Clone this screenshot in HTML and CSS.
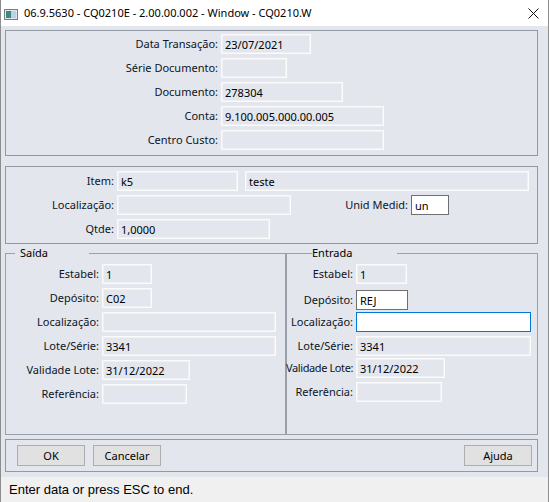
FILE: index.html
```html
<!DOCTYPE html>
<html lang="pt">
<head>
  <meta charset="UTF-8">
  <title>CQ0210.W</title>
  <link rel="stylesheet" href="styles.css">
</head>
<body>

  <div class="window">
    <div class="titlebar">
      <svg class="app-icon" width="14" height="11" viewBox="0 0 14 11">
        <rect x="0.5" y="0.5" width="13" height="10" fill="#dfe7ee" stroke="#7d7d7d"/>
        <rect x="2" y="2" width="5" height="7" fill="#3d8a78"/>
        <rect x="7" y="2" width="5" height="7" fill="#b9d3e6"/>
      </svg>
      <span class="title">06.9.5630 - CQ0210E - 2.00.00.002 - Window - CQ0210.W</span>
      <svg class="close" width="11" height="11" viewBox="0 0 11 11">
        <path d="M0.5 0.5 L10.5 10.5 M10.5 0.5 L0.5 10.5" stroke="#111" stroke-width="1"/>
      </svg>
    </div>

    <div class="client">
      <!-- cabecalho da transacao -->
      <div class="panel head-panel">
        <div class="row"><label class="lbl-head">Data Transação:</label><input class="field w90" value="23/07/2021" readonly></div>
        <div class="row"><label class="lbl-head">Série Documento:</label><input class="field w66" value="" readonly></div>
        <div class="row"><label class="lbl-head">Documento:</label><input class="field w122" value="278304" readonly></div>
        <div class="row"><label class="lbl-head">Conta:</label><input class="field w163" value="9.100.005.000.00.005" readonly></div>
        <div class="row"><label class="lbl-head">Centro Custo:</label><input class="field w163" value="" readonly></div>
      </div>

      <!-- item -->
      <div class="panel item-panel">
        <div class="row"><label class="lbl-item">Item:</label><input class="field w121" value="k5" readonly><input class="field w284 gap7" value="teste" readonly></div>
        <div class="row"><label class="lbl-item">Localização:</label><input class="field w174" value="" readonly><label class="lbl-unid">Unid Medid:</label><input class="field edit w38" value="un"></div>
        <div class="row"><label class="lbl-item">Qtde:</label><input class="field w153" value="1,0000" readonly></div>
      </div>

      <div class="groups">
        <fieldset class="group saida">
          <legend>Saída</legend>
          <div class="row"><label class="lbl-saida">Estabel:</label><input class="field w50" value="1" readonly></div>
          <div class="row"><label class="lbl-saida">Depósito:</label><input class="field w50" value="C02" readonly></div>
          <div class="row"><label class="lbl-saida">Localização:</label><input class="field w174" value="" readonly></div>
          <div class="row"><label class="lbl-saida">Lote/Série:</label><input class="field w174" value="3341" readonly></div>
          <div class="row"><label class="lbl-saida">Validade Lote:</label><input class="field w88" value="31/12/2022" readonly></div>
          <div class="row"><label class="lbl-saida">Referência:</label><input class="field w85" value="" readonly></div>
        </fieldset>

        <fieldset class="group entrada">
          <legend>Entrada</legend>
          <div class="row"><label class="lbl-entrada">Estabel:</label><input class="field w51" value="1" readonly></div>
          <div class="row loose"><label class="lbl-entrada">Depósito:</label><input class="field edit w52" value="REJ"></div>
          <div class="row tight"><label class="lbl-entrada">Localização:</label><input class="field edit focus w175" value=""></div>
          <div class="row"><label class="lbl-entrada">Lote/Série:</label><input class="field w175" value="3341" readonly></div>
          <div class="row tight"><label class="lbl-entrada condensed">Validade Lote:</label><input class="field w89" value="31/12/2022" readonly></div>
          <div class="row"><label class="lbl-entrada">Referência:</label><input class="field w86" value="" readonly></div>
        </fieldset>
      </div>

      <div class="panel button-panel">
        <button class="btn">OK</button>
        <button class="btn">Cancelar</button>
        <button class="btn push-right">Ajuda</button>
      </div>
    </div>

    <div class="statusbar">Enter data or press ESC to end.</div>
  </div>

</body>
</html>
```

FILE: styles.css
```css
* {
  box-sizing: border-box;
}

body {
  margin: 0;
  font-family: "Noto Sans", "Liberation Sans", sans-serif;
  font-size: 11px;
  background: #ffffff;
}

.window {
  width: 549px;
  height: 502px;
  border-left: 1px solid #8d8d8d;
  border-right: 1px solid #8d8d8d;
  display: flex;
  flex-direction: column;
}

/* barra de titulo */
.titlebar {
  height: 26px;
  display: flex;
  align-items: center;
  background: #ffffff;
  flex-shrink: 0;
}

.app-icon {
  margin-left: 3px;
  margin-top: 2px;
}

.title {
  margin-left: 6px;
  font-size: 11px;
  color: #000;
  line-height: 14px;
}

.close {
  margin-left: auto;
  margin-right: 9px;
}

.client {
  flex: 1;
  background: #e3e6ed;
  padding: 4px 10px 4px 4px;
}

.panel {
  border: 1px solid #9199a5;
}

.head-panel {
  padding: 3px 0 5px 0;
}

.item-panel {
  margin-top: 10px;
  padding: 4px 0 4px 0;
}

.row {
  display: flex;
  align-items: center;
  height: 20px;
  margin-top: 4px;
}

.row:first-child,
legend + .row {
  margin-top: 0;
}

.row.loose { margin-top: 6px; }
.row.tight { margin-top: 2px; }

label {
  display: flex;
  justify-content: flex-end;
  color: #0d1526;
  margin-right: 3px;
  white-space: nowrap;
  line-height: 14px;
  flex-shrink: 0;
}

label.condensed {
  letter-spacing: -0.4px;
}

.lbl-head { width: 212px; }
.lbl-item { width: 108px; }
.lbl-unid { width: 117px; }
.lbl-saida { width: 93px; }
.lbl-entrada { width: 66px; }

.field {
  height: 20px;
  margin: 0;
  padding: 0 3px;
  font-family: "Noto Sans", "Liberation Sans", sans-serif;
  font-size: 11px;
  color: #000;
  background: #e3e6ed;
  border: 1px solid #fbfbfc;
  box-shadow: inset 0 0 0 1px #eef0f3;
  outline: none;
  flex-shrink: 0;
}

.field.edit {
  background: #ffffff;
  border: 1px solid #6f6f6f;
  box-shadow: none;
}

.field.focus {
  border-color: #0078d7;
}

.gap7 { margin-left: 7px; }

.w38 { width: 38px; }
.w50 { width: 50px; }
.w51 { width: 51px; }
.w52 { width: 52px; }
.w66 { width: 66px; }
.w85 { width: 85px; }
.w86 { width: 86px; }
.w88 { width: 88px; }
.w89 { width: 89px; }
.w90 { width: 90px; }
.w121 { width: 121px; }
.w122 { width: 122px; }
.w153 { width: 153px; }
.w163 { width: 163px; }
.w174 { width: 174px; }
.w175 { width: 175px; }
.w284 { width: 284px; }

/* saida / entrada */
.groups {
  display: flex;
  margin-top: 2px;
}

.group {
  margin: 0;
  min-width: 0;
  border: 1px solid #9aa0aa;
  padding: 4px 0 30px 0;
}

.group legend {
  font-size: 11px;
  line-height: 14px;
  color: #000;
  padding: 0;
}

.saida {
  width: 281px;
}

.saida legend {
  margin-left: 9px;
  width: 74px;
  padding-left: 5px;
}

.entrada {
  width: 252px;
}

.entrada legend {
  margin-left: 25px;
  width: 85px;
}

.button-panel {
  margin-top: 4px;
  display: flex;
  gap: 8px;
  padding: 5px 5px 5px 11px;
}

.btn {
  width: 68px;
  height: 21px;
  margin: 0;
  padding: 0;
  font-family: "Noto Sans", "Liberation Sans", sans-serif;
  font-size: 11px;
  color: #000;
  background: #e1e1e1;
  border: 1px solid #adadad;
}

.push-right {
  margin-left: auto;
}

.statusbar {
  height: 25px;
  flex-shrink: 0;
  background: #f0f0f0;
  font-family: "Liberation Sans", Arial, sans-serif;
  font-size: 13px;
  line-height: 25px;
  padding-left: 8px;
  color: #000;
}
```
